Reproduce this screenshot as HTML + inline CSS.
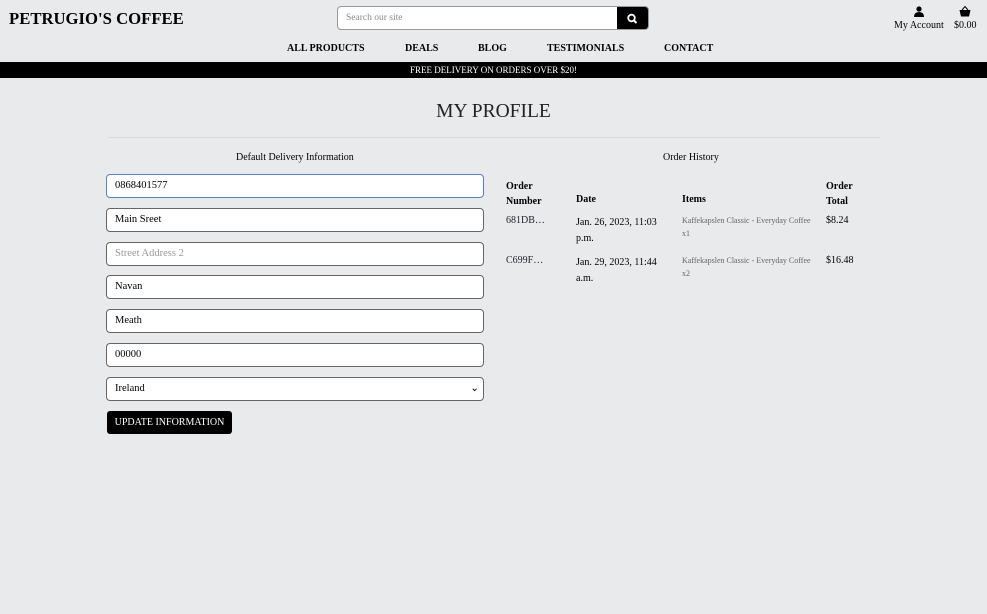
<!DOCTYPE html>
<html><head><meta charset="utf-8"><style>
*{box-sizing:border-box;margin:0;padding:0}
body{width:987px;height:614px;background:#e9eaeb;font-family:"Liberation Serif",serif;color:#000;position:relative;overflow:hidden}
.abs{position:absolute}
.logo{left:9px;top:9px;font-size:16.7px;font-weight:bold}
.search{left:337px;top:6px;width:312px;height:24px;border:1px solid #999;border-radius:4px;background:#fff;overflow:hidden}
.search span{position:absolute;left:8px;top:6px;font-size:9.5px;color:#888}
.search .btn{position:absolute;right:0;top:0;width:31px;height:24px;background:#000}
.nav{top:43px;font-size:10px;font-weight:bold}
.banner{left:0;top:62px;width:987px;height:16px;background:#000;color:#fff;font-size:9px;text-align:center;line-height:16px}
h1{position:absolute;left:0;width:987px;top:101px;text-align:center;font-size:19.5px;font-weight:normal;color:#222}
.hr{left:107px;top:137px;width:773px;height:1px;background:#dcdcdc}
.inp{left:106px;width:378px;height:24px;border:1px solid #666;border-radius:4px;background:#fff;font-size:10.5px;padding-left:8px;line-height:22px}
.sm{font-size:10px}
.it{color:#666;font-size:8px;line-height:13px}
</style></head><body>
<div class="abs logo">PETRUGIO'S COFFEE</div>
<div class="abs search"><span>Search our site</span><div class="btn"><svg width="31" height="24"><circle cx="14.5" cy="11" r="3.3" stroke="#fff" stroke-width="1.8" fill="none"/><line x1="17" y1="13.5" x2="19.5" y2="16" stroke="#fff" stroke-width="2"/></svg></div></div>
<svg class="abs" style="left:913px;top:6px" width="12" height="11"><circle cx="6" cy="3" r="2.6" fill="#000"/><path d="M1 11 Q1 6 6 6 Q11 6 11 11Z" fill="#000"/></svg>
<div class="abs sm" style="left:894px;top:20px">My Account</div>
<svg class="abs" style="left:959px;top:6px" width="12" height="11"><path d="M3 4 L6 0.5 L9 4" stroke="#000" fill="none"/><path d="M0.5 4 H11.5 L10 10.5 H2Z" fill="#000"/></svg>
<div class="abs sm" style="left:954px;top:20px">$0.00</div>
<div class="abs nav" style="left:287px">ALL PRODUCTS</div>
<div class="abs nav" style="left:405px">DEALS</div>
<div class="abs nav" style="left:478px">BLOG</div>
<div class="abs nav" style="left:547px">TESTIMONIALS</div>
<div class="abs nav" style="left:664px">CONTACT</div>
<div class="abs banner">FREE DELIVERY ON ORDERS OVER $20!</div>
<h1>MY PROFILE</h1>
<div class="abs hr"></div>
<div class="abs sm" style="left:236px;top:152px">Default Delivery Information</div>
<div class="abs inp" style="top:174px;border-color:#5b7fc0">0868401577</div>
<div class="abs inp" style="top:208px">Main Sreet</div>
<div class="abs inp" style="top:242px;color:#999">Street Address 2</div>
<div class="abs inp" style="top:275px">Navan</div>
<div class="abs inp" style="top:309px">Meath</div>
<div class="abs inp" style="top:343px">00000</div>
<div class="abs inp" style="top:377px">Ireland<span style="position:absolute;right:4px;top:0">&#8964;</span></div>
<div class="abs" style="left:107px;top:411px;width:125px;height:23px;background:#000;color:#fff;border-radius:3px;font-size:10px;line-height:23px;text-align:center">UPDATE INFORMATION</div>
<div class="abs sm" style="left:663px;top:152px">Order History</div>
<div class="abs" style="left:506px;top:179px;font-size:10px;font-weight:bold;line-height:15px">Order<br>Number</div>
<div class="abs" style="left:576px;top:194px;font-size:10px;font-weight:bold">Date</div>
<div class="abs" style="left:682px;top:194px;font-size:10px;font-weight:bold">Items</div>
<div class="abs" style="left:826px;top:179px;font-size:10px;font-weight:bold;line-height:15px">Order<br>Total</div>
<div class="abs sm" style="left:506px;top:215px;color:#223">681DB…</div>
<div class="abs sm" style="left:576px;top:215px;line-height:16px">Jan. 26, 2023, 11:03<br>p.m.</div>
<div class="abs it" style="left:682px;top:214px">Kaffekapslen Classic - Everyday Coffee<br>x1</div>
<div class="abs sm" style="left:826px;top:215px">$8.24</div>
<div class="abs sm" style="left:506px;top:255px;color:#223">C699F…</div>
<div class="abs sm" style="left:576px;top:255px;line-height:16px">Jan. 29, 2023, 11:44<br>a.m.</div>
<div class="abs it" style="left:682px;top:254px">Kaffekapslen Classic - Everyday Coffee<br>x2</div>
<div class="abs sm" style="left:826px;top:255px">$16.48</div>
</body></html>
